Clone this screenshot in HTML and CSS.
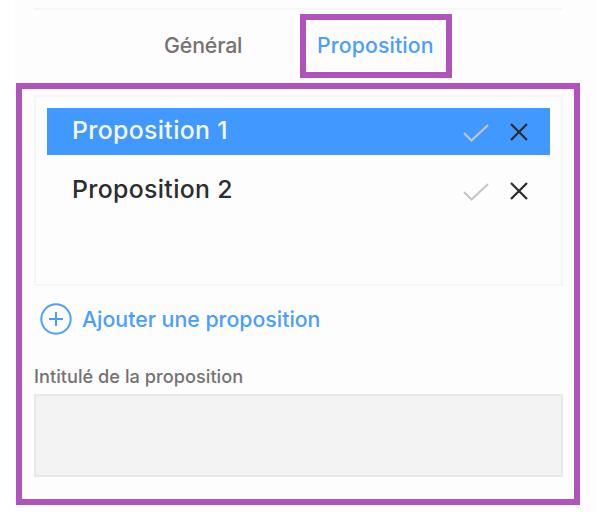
FILE: index.html
```html
<!DOCTYPE html>
<html lang="fr">
<head>
    <meta charset="UTF-8">
    <meta name="viewport" content="width=device-width, initial-scale=1.0">
    <title>Proposition</title>
    <link rel="stylesheet" href="styles.css">
</head>
<body>

    <div class="panel">
        <div class="tabs">
            <div class="tab">Général</div>
            <div class="tab active">Proposition</div>
        </div>

        <div class="content">
            <div class="list">
                <div class="item selected">
                    <span class="item-name">Proposition 1</span>
                    <svg class="check" viewBox="0 0 26 18"><path d="M1 9 L8.5 16.5 L25 1"/></svg>
                    <svg class="cross" viewBox="0 0 18 18"><path d="M1 1 L17 17 M17 1 L1 17"/></svg>
                </div>
                <div class="item">
                    <span class="item-name">Proposition 2</span>
                    <svg class="check" viewBox="0 0 26 18"><path d="M1 9 L8.5 16.5 L25 1"/></svg>
                    <svg class="cross" viewBox="0 0 18 18"><path d="M1 1 L17 17 M17 1 L1 17"/></svg>
                </div>
            </div>

            <div class="add">
                <svg class="plus" viewBox="0 0 32 32"><circle cx="16" cy="16" r="14.7"/><path d="M16 9 V23 M9 16 H23"/></svg>
                <span>Ajouter une proposition</span>
            </div>

            <label class="label" for="title">Intitulé de la proposition</label>
            <input type="text" class="input-field" id="title">
        </div>
    </div>

</body>
</html>
```
FILE: styles.css
```css
* {
    margin: 0;
    padding: 0;
    box-sizing: border-box;
    font-family: 'Inter', sans-serif;
}

body {
    background: #fff;
    overflow: hidden;
}

.panel {
    margin-left: 15px;
    height: 512px;
    padding-top: 8px;
    background: #fdfdfd;
}

.tabs {
    display: flex;
    width: 528px;
    height: 75px;
    margin-left: 19px;
    padding: 4px 0 0 130px;
    border-top: 2px solid #f5f5f5;
}

.tab {
    width: 136px;
    height: 64px;
    line-height: 63px;
    font-size: 21.3px;
    font-weight: 500;
    letter-spacing: -0.15px;
    color: #767172;
}

.tab.active {
    width: 152px;
    line-height: 51px;
    padding-left: 11px;
    letter-spacing: 0.1px;
    border: 6px solid #b053bd;
    color: #4a9eff;
}

.content {
    width: 564px;
    height: 422px;
    margin-left: 1px;
    padding: 6px 11px 0 12px;
    border: 6px solid #b053bd;
}

.list {
    height: 191px;
    padding: 11px;
    border: 2px solid #f6f6f6;
}

.item {
    display: flex;
    align-items: center;
    height: 47px;
    margin-bottom: 12px;
    padding: 0 22px 0 25px;
    color: #2d2d2d;
}

.item.selected {
    background: #4199ff;
    color: #f4f8ff;
}

.item-name {
    flex: 1;
    font-size: 24.8px;
    font-weight: 500;
    letter-spacing: 0.35px;
    line-height: 44px;
    padding-bottom: 4px;
}

.check {
    width: 26px;
    height: 18px;
    margin: 3px 21px 0 0;
    fill: none;
    stroke: #c5c5c9;
    stroke-width: 2;
}

.cross {
    width: 18px;
    height: 18px;
    fill: none;
    stroke: #2a2a2e;
    stroke-width: 2.2;
}

.add {
    display: flex;
    align-items: center;
    height: 32px;
    margin: 17px 0 0 6px;
    color: #4a9eff;
    font-size: 21.3px;
    font-weight: 500;
}

.plus {
    width: 32px;
    height: 32px;
    margin-right: 10px;
    fill: none;
    stroke: #4a9eff;
    stroke-width: 2;
}

.label {
    display: block;
    height: 28px;
    margin-top: 31px;
    font-size: 18.2px;
    font-weight: 500;
    letter-spacing: 0.02px;
    line-height: 20px;
    color: #767172;
}

.input-field {
    display: block;
    width: 100%;
    height: 83px;
    border: 2px solid #e8e8e8;
    background: #f3f3f3;
    outline: none;
}
```
